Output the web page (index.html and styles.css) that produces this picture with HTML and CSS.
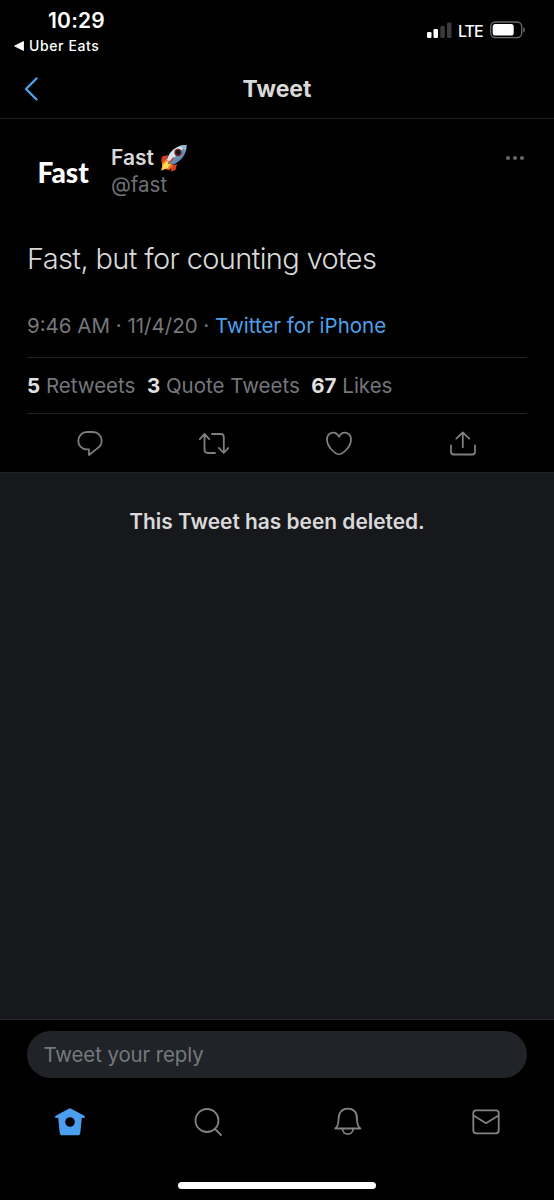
FILE: index.html
```html
<!DOCTYPE html>
<html lang="en">
<head>
<meta charset="utf-8">
<title>Tweet</title>
<link rel="stylesheet" href="styles.css">
</head>
<body>
<div class="phone">
  <header class="status">
    <div class="status-left">
      <div class="clock">10:29</div>
      <div class="return-app"><svg width="10" height="10" viewBox="0 0 10 10"><path d="M9.500 .5v9L.5 5z" fill="#fff" stroke="#fff" stroke-width=".8" stroke-linejoin="round"/></svg><span>Uber Eats</span></div>
    </div>
    <div class="status-right">
      <svg width="26" height="18" viewBox="0 0 26 18"><rect y="11" width="4.500" height="6" rx="1.300" fill="#fff"/><rect x="6.500" y="8" width="4.500" height="9" rx="1.300" fill="#fff"/><rect x="13.300" y="5" width="4.500" height="12" rx="1.300" fill="#3b3b3d"/><rect x="20" y="1.500" width="4.500" height="15.500" rx="1.300" fill="#3b3b3d"/></svg>
      <span class="lte">LTE</span>
      <svg width="36" height="18" viewBox="0 0 36 18"><rect x=".7" y="1" width="31" height="15.600" rx="4.500" fill="none" stroke="#6b6b6d" stroke-width="1.300"/><rect x="2.700" y="3" width="21" height="11.600" rx="2.600" fill="#fff"/><path d="M33.300 6.200c2 .8 2 4.400 0 5.200z" fill="#77777a"/></svg>
    </div>
  </header>
  <nav class="titlebar">
    <svg class="back" width="16" height="26" viewBox="0 0 16 26"><path d="M13.500 2.500 3 13l10.500 10.500" fill="none" stroke="#4ea0eb" stroke-width="2.400" stroke-linecap="round" stroke-linejoin="round"/></svg>
    <h1>Tweet</h1>
  </nav>
  <main>
    <article class="tweet">
      <div class="author">
        <div class="avatar">Fast</div>
        <div class="names">
          <div class="name"><span>Fast</span>
            <svg class="rocket" width="28" height="28" viewBox="0 0 28 28">
              <path d="M8 11 2 12.500 1 18l6-2zM17 20l-1.500 6-5 1.500 1-6z" fill="#d64024"/>
              <path d="m2 18 5-3 6 7-4 4-4-1-4 2 1-4z" fill="#f47b20"/>
              <path d="m1.500 26 2-6 4-3 3 3-3 4z" fill="#ffe155"/>
              <path d="M7 16C9 8 16 1 26.500 1 27 11 20 18 12 21z" fill="#628fb8"/>
              <path d="M7 16C9 8 16 1 26.500 1L10 18z" fill="#d7e5ed"/>
              <path d="M20 2c2.500-.8 4.500-1 6.500-1 0 2-.2 4-.8 6z" fill="#93b7ce"/>
              <circle cx="18" cy="8.500" r="3.700" fill="#842523"/><circle cx="18" cy="8.500" r="2.400" fill="#17191e"/>
              <path d="m8.500 19.500 5-5.500" stroke="#c54336" stroke-width="1.600" stroke-linecap="round"/>
            </svg>
          </div>
          <div class="handle">@fast</div>
        </div>
        <svg class="more" width="20" height="6" viewBox="0 0 20 6" fill="#626468"><circle cx="3" cy="3" r="2.100"/><circle cx="10" cy="3" r="2.100"/><circle cx="17" cy="3" r="2.100"/></svg>
      </div>
      <p class="message">Fast, but for counting votes</p>
      <div class="meta"><span class="date">9:46 AM · 11/4/20 · </span><a>Twitter for iPhone</a></div>
      <div class="counts"><div class="rt"><b>5</b> Retweets</div><div class="qt"><b>3</b> Quote Tweets</div><div class="lk"><b>67</b> Likes</div></div>
      <div class="actions">
        <svg viewBox="0 0 30 30"><path d="M12 3h6c5 0 8.700 4 8.700 8.700 0 3.300-1.900 6.200-4.700 7.900l-8 6.400v-5.600h-2C6.800 20.400 3.300 16.700 3.300 11.900 3.300 7 7 3 12 3z"/></svg>
        <svg viewBox="0 0 30 30"><path d="m.8 10.200 4.700-5.300 4.700 5.300M5.500 5.200v15.600c0 2 1 3.200 3.200 3.200H16M13 5h8.500c2.200 0 3.300 1.200 3.300 3.200v15.600m-5-4.900 4.900 5.100 4.800-5.100"/></svg>
        <svg viewBox="0 0 30 30"><path d="M15 7.700C11.500 1.200 3 3 3 10.800 3 18 11.500 25.300 15 25.300S27 18 27 10.800C27 3 18.500 1.200 15 7.700z"/></svg>
        <svg viewBox="0 0 30 30"><path d="m8.300 9.600 6.500-6.100 6.500 6.100M14.800 4v14.300M3 16.300v6.500c0 1.900 1 2.700 2.700 2.700h18.600c1.700 0 2.700-.8 2.700-2.700v-6.500"/></svg>
      </div>
    </article>
    <section class="deleted">This Tweet has been deleted.</section>
  </main>
  <footer>
    <div class="reply"><span>Tweet your reply</span></div>
    <div class="tabs">
      <svg viewBox="0 0 34 34"><path fill="#4c9fef" stroke="none" fill-rule="evenodd" d="M16.200 3.400c.5-.3 1-.3 1.500 0l13.600 7.300c1.300.8.500 2.700-.9 2.300L28.800 12.700l-1.500 15c-.2 1.800-1.200 2.600-2.800 2.600h-15c-1.600 0-2.600-.8-2.800-2.600l-1.500-15-1.600.3c-1.400.4-2.200-1.500-.9-2.300zM17 12.200a4.800 4.800 0 1 0 0 9.600 4.800 4.800 0 0 0 0-9.600z"/></svg>
      <svg viewBox="0 0 34 34"><circle cx="16" cy="15.500" r="11.500"/><path d="m24 24 6 6"/></svg>
      <svg viewBox="0 0 34 34"><path d="M5.300 23.500c2.500-2 3.200-4.500 3.200-8.500 0-7.500 3.300-11.300 9.300-11.300s9.300 3.800 9.300 11.300c0 4 .7 6.500 3.200 8.500zM12.500 23.500c0 7.500 10.600 7.500 10.600 0"/></svg>
      <svg viewBox="0 0 34 34"><rect x="4.300" y="5.300" width="25.400" height="23" rx="2.700"/><path d="M4.500 10.500 17 18.200l12.500-7.700"/></svg>
    </div>
    <div class="home-indicator"></div>
  </footer>
</div>
</body>
</html>
```
FILE: styles.css
```css
* { box-sizing: border-box; }
body { margin: 0; background: #000; font-family: Inter, "Liberation Sans", sans-serif; }
svg { display: block; flex: none; }
.phone { width: 554px; height: 1200px; display: flex; flex-direction: column; background: #000; color: #d9d9d9; }
.status { height: 60px; display: flex; justify-content: space-between; color: #fff; }
.status-left { padding: 8px 0 0 14px; }
.clock { margin-left: 34px; font-size: 21px; line-height: 26px; font-weight: 600; letter-spacing: .2px; }
.return-app { display: flex; align-items: center; gap: 5px; font-size: 14px; line-height: 23px; font-weight: 500; letter-spacing: .6px; }
.status-right { display: flex; align-items: center; height: 18px; margin-top: 21px; padding-right: 28px; }
.lte { width: 32px; margin: 1px 0 0 5px; font-size: 16px; line-height: 18px; font-weight: 500; letter-spacing: -1px; }
.titlebar { height: 59px; display: grid; grid-template-columns: 60px 1fr 60px; align-items: center; border-bottom: 1px solid #202225; }
.back { margin-left: 23px; }
h1 { margin: 0; text-align: center; font-size: 23px; line-height: 30px; font-weight: 700; }
main { height: 901px; display: flex; flex-direction: column; }
.tweet { height: 353px; padding: 0 27px; }
.author { height: 104px; display: flex; padding-top: 25px; }
.avatar { width: 84px; padding: 11px 0 0 10.500px; color: #fff; font-family: Lato, sans-serif; font-size: 28px; line-height: 34px; font-weight: 900; }
.names { flex: 1; }
.name { height: 28px; display: flex; gap: 6px; font-size: 21px; line-height: 28px; font-weight: 600; }
.handle { font-size: 20.500px; line-height: 26px; color: #6e7277; }
.more { margin: 11px 2px 0 0; }
.message { height: 70px; margin: 0; padding-top: 16px; font-size: 29px; line-height: 40px; font-weight: 300; letter-spacing: -.64px; white-space: nowrap; }
.meta { height: 65px; padding-top: 19px; font-size: 20.500px; line-height: 28px; color: #75777b; border-bottom: 1px solid #202225; display: flex; white-space: pre; }
.meta a { color: #4ea0eb; }
.counts { height: 56px; display: flex; align-items: center; gap: 11.500px; border-bottom: 1px solid #202225; font-size: 20.500px; color: #75777b; white-space: nowrap; }
.counts b { color: #e1e1e1; font-weight: 700; }
.actions { height: 58px; display: flex; gap: 94.500px; padding: 15px 0 0 47.500px; }
.actions svg { width: 30px; height: 30px; fill: none; stroke: #7d7e82; stroke-width: 1.800; stroke-linejoin: round; stroke-linecap: round; }
.deleted { flex: 1; padding-top: 35px; background: #17181c; border-top: 1px solid #222327; border-bottom: 1px solid #2b2c30; text-align: center; font-size: 20.900px; line-height: 28px; font-weight: 600; }
footer { height: 180px; padding: 11px 27px 0; }
.reply { height: 47px; border-radius: 24px; padding: 0 16.500px; background: #202327; color: #76797d; font-size: 20.400px; line-height: 48px; letter-spacing: -.08px; }
.tabs { height: 94px; display: flex; justify-content: space-between; padding: 27px 24px 0 25.500px; }
.tabs svg { width: 34px; height: 34px; fill: none; stroke: #818286; stroke-width: 1.800; stroke-linejoin: round; stroke-linecap: round; }
.home-indicator { width: 198px; height: 7px; margin: 10px auto 0; border-radius: 4px; background: #fff; }
```
